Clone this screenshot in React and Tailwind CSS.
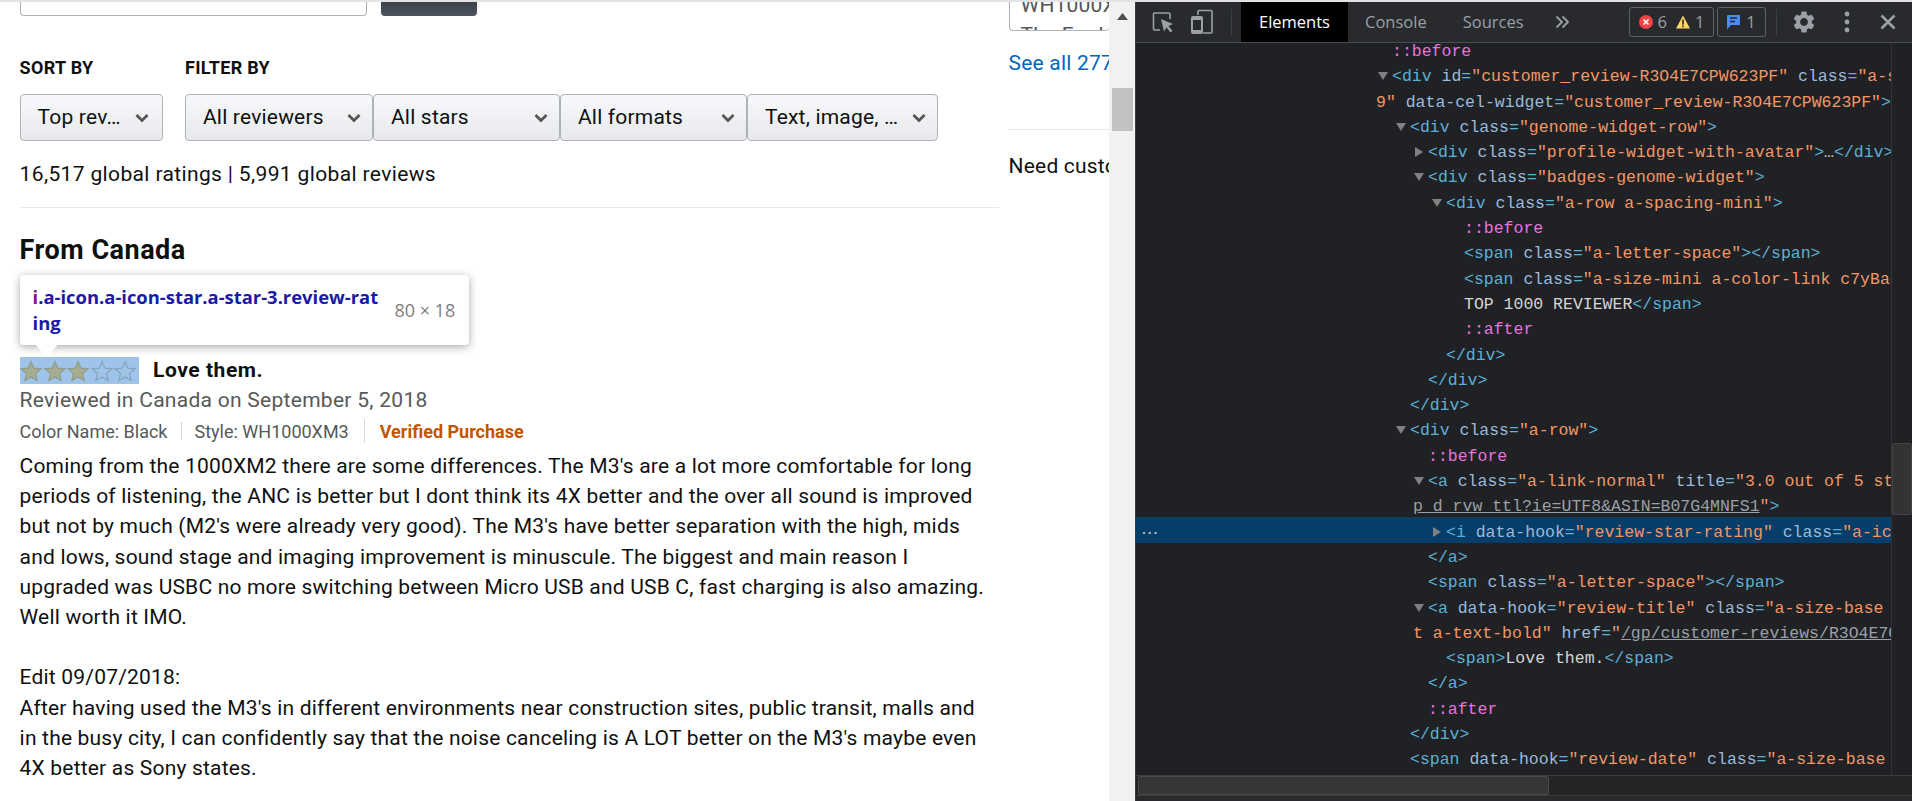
import { MdSettings } from "react-icons/md";

const FILTERS = [
  { label: "All reviewers", width: "w-[188px]" },
  { label: "All stars", width: "w-[187px]" },
  { label: "All formats", width: "w-[187px]" },
  { label: "Text, image, …", width: "w-[191px]" },
];

const REVIEW_LINES = [
  "Coming from the 1000XM2 there are some differences. The M3's are a lot more comfortable for long",
  "periods of listening, the ANC is better but I dont think its 4X better and the over all sound is improved",
  "but not by much (M2's were already very good). The M3's have better separation with the high, mids",
  "and lows, sound stage and imaging improvement is minuscule. The biggest and main reason I",
  "upgraded was USBC no more switching between Micro USB and USB C, fast charging is also amazing.",
  "Well worth it IMO.",
  "",
  "Edit 09/07/2018:",
  "After having used the M3's in different environments near construction sites, public transit, malls and",
  "in the busy city, I can confidently say that the noise canceling is A LOT better on the M3's maybe even",
  "4X better as Sony states.",
];

const INDENT = {
  0: "pl-[256px]",
  1: "pl-[274px]",
  2: "pl-[292px]",
  3: "pl-[310px]",
  4: "pl-[328px]",
  wrap0: "pl-[240px]",
  wrap2: "pl-[277px]",
};

const TOKEN = {
  t: "text-[#5db0d7]",
  n: "text-[#9bbbdc]",
  v: "text-[#f29766]",
  p: "text-[#e973de]",
  x: "text-[#d5d5d5]",
  l: "text-[#9aa0a6] underline",
  e: "text-[#d5d5d5]",
};

const TREE = [
  { i: 0, s: [["p", "::before"]] },
  { i: 0, a: "down", s: [["t", "<div "], ["n", "id"], ["t", "="], ["v", '"customer_review-R3O4E7CPW623PF"'], ["n", " class"], ["t", "="], ["v", '"a-section review aok-relative"']] },
  { i: "wrap0", s: [["v", '9"'], ["n", " data-cel-widget"], ["t", "="], ["v", '"customer_review-R3O4E7CPW623PF"'], ["t", ">"]] },
  { i: 1, a: "down", s: [["t", "<div "], ["n", "class"], ["t", "="], ["v", '"genome-widget-row"'], ["t", ">"]] },
  { i: 2, a: "right", s: [["t", "<div "], ["n", "class"], ["t", "="], ["v", '"profile-widget-with-avatar"'], ["t", ">"], ["e", "…"], ["t", "</div>"]] },
  { i: 2, a: "down", s: [["t", "<div "], ["n", "class"], ["t", "="], ["v", '"badges-genome-widget"'], ["t", ">"]] },
  { i: 3, a: "down", s: [["t", "<div "], ["n", "class"], ["t", "="], ["v", '"a-row a-spacing-mini"'], ["t", ">"]] },
  { i: 4, s: [["p", "::before"]] },
  { i: 4, s: [["t", "<span "], ["n", "class"], ["t", "="], ["v", '"a-letter-space"'], ["t", "></span>"]] },
  { i: 4, s: [["t", "<span "], ["n", "class"], ["t", "="], ["v", '"a-size-mini a-color-link c7yBadge"']] },
  { i: 4, s: [["x", "TOP 1000 REVIEWER"], ["t", "</span>"]] },
  { i: 4, s: [["p", "::after"]] },
  { i: 3, s: [["t", "</div>"]] },
  { i: 2, s: [["t", "</div>"]] },
  { i: 1, s: [["t", "</div>"]] },
  { i: 1, a: "down", s: [["t", "<div "], ["n", "class"], ["t", "="], ["v", '"a-row"'], ["t", ">"]] },
  { i: 2, s: [["p", "::before"]] },
  { i: 2, a: "down", s: [["t", "<a "], ["n", "class"], ["t", "="], ["v", '"a-link-normal"'], ["n", " title"], ["t", "="], ["v", '"3.0 out of 5 stars"']] },
  { i: "wrap2", s: [["l", "p_d_rvw_ttl?ie=UTF8&ASIN=B07G4MNFS1"], ["v", '"'], ["t", ">"]] },
  { i: 3, a: "right", selected: true, s: [["t", "<i "], ["n", "data-hook"], ["t", "="], ["v", '"review-star-rating"'], ["n", " class"], ["t", "="], ["v", '"a-icon a-icon-star"']] },
  { i: 2, s: [["t", "</a>"]] },
  { i: 2, s: [["t", "<span "], ["n", "class"], ["t", "="], ["v", '"a-letter-space"'], ["t", "></span>"]] },
  { i: 2, a: "down", s: [["t", "<a "], ["n", "data-hook"], ["t", "="], ["v", '"review-title"'], ["n", " class"], ["t", "="], ["v", '"a-size-base a-link-normal"']] },
  { i: "wrap2", s: [["v", "t a-text-bold"], ["v", '"'], ["n", " href"], ["t", "="], ["v", '"'], ["l", "/gp/customer-reviews/R3O4E7CPW623PF/ref"]] },
  { i: 3, s: [["t", "<span>"], ["x", "Love them."], ["t", "</span>"]] },
  { i: 2, s: [["t", "</a>"]] },
  { i: 2, s: [["p", "::after"]] },
  { i: 1, s: [["t", "</div>"]] },
  { i: 1, s: [["t", "<span "], ["n", "data-hook"], ["t", "="], ["v", '"review-date"'], ["n", " class"], ["t", "="], ["v", '"a-size-base a-color-secondary"']] },
];

function Chevron() {
  return (
    <svg width="14" height="10" viewBox="0 0 14 10" className="shrink-0">
      <path d="M1.5 2 L7 7.5 L12.5 2" fill="none" stroke="#555" strokeWidth="2.8" />
    </svg>
  );
}

function Select({ label, className }) {
  return (
    <div
      className={`flex h-[47px] items-center justify-between rounded-[4px] border border-[#adb1b8] bg-gradient-to-b from-[#f7f8fa] to-[#e7e9ec] pl-[17px] text-[#0f1111] ${className}`}
    >
      <span>{label}</span>
      <Chevron />
    </div>
  );
}

function Star({ filled }) {
  return (
    <svg width="24" height="24" viewBox="0 0 24 24" className="-mx-[0.3px] shrink-0">
      <path
        d="M12 2.5 L14.8 9.2 L22 9.8 L16.5 14.6 L18.2 21.6 L12 17.9 L5.8 21.6 L7.5 14.6 L2 9.8 L9.2 9.2 Z"
        fill={filled ? "#a5ad8f" : "none"}
        stroke={filled ? "#8f9c8c" : "#86a2ba"}
        strokeWidth="1.2"
      />
    </svg>
  );
}

function Arrow({ dir }) {
  return (
    <span className="-ml-[14px] inline-block w-[14px]">
      <svg width="10" height="10" viewBox="0 0 10 10">
        <path d={dir === "down" ? "M0 1 L10 1 L5 9 Z" : "M1 0 L9 5 L1 10 Z"} fill="#808080" />
      </svg>
    </span>
  );
}

function TreeRow({ row }) {
  return (
    <div className={`relative h-[25.3px] leading-[25.3px] whitespace-pre ${INDENT[row.i]}`}>
      {row.selected && (
        <>
          <div className="absolute inset-x-0 -top-[2.5px] h-[26px] bg-[#073d69]" />
          <span className="absolute left-[4px] -top-[2px] text-[13px] font-bold tracking-[-2px] text-[#c4c7c5]">...</span>
        </>
      )}
      <span className="relative">
        {row.a && <Arrow dir={row.a} />}
        {row.s.map(([kind, text], idx) => (
          <span key={idx} className={TOKEN[kind]}>
            {text}
          </span>
        ))}
      </span>
    </div>
  );
}

function AmazonPane() {
  return (
    <div className="flex h-full w-[1109px] shrink-0 overflow-hidden bg-white font-['Roboto',sans-serif] text-[21px] tracking-[0.19px] text-[#0f1111]">
      <div className="ml-[19.6px] w-[979px] shrink-0">
        <div className="flex h-[14px] gap-[14px]">
          <div className="w-[347px] rounded-b-[4px] border border-t-0 border-[#adb1b8] bg-white" />
          <div className="w-[96px] rounded-b-[4px] bg-gradient-to-b from-[#3b424b] to-[#4d545e]" />
        </div>

        <div className="mt-[42px] flex">
          <div className="w-[165.4px] shrink-0">
            <div className="text-[18px] font-bold leading-[20px] tracking-[0.3px]">SORT BY</div>
            <Select label="Top rev…" className="mt-[16px] w-[143px] pr-[13px]" />
          </div>
          <div>
            <div className="text-[18px] font-bold leading-[20px] tracking-[0.3px]">FILTER BY</div>
            <div className="mt-[16px] flex">
              {FILTERS.map((f) => (
                <Select key={f.label} label={f.label} className={`${f.width} pr-[11px]`} />
              ))}
            </div>
          </div>
        </div>

        <div className="mt-[18px] leading-[30px] tracking-[0.36px]">16,517 global ratings | 5,991 global reviews</div>
        <div className="mt-[18px] h-px bg-[#e7e7e7]" />
        <div className="mt-[27px] text-[27px] font-bold leading-[30px] tracking-[0.5px]">From Canada</div>

        <div className="relative mt-[92px] flex h-[27px] items-center">
          <div className="absolute -top-[82px] left-0 flex h-[70px] w-[449.6px] items-center justify-between rounded-[4px] bg-white pl-[13px] pr-[14px] font-['Open_Sans',sans-serif] tracking-normal shadow-[0_2px_8px_rgba(0,0,0,0.35)]">
            <div className="text-[18.4px] font-bold leading-[26px] text-[#1a1aa6]">
              <span className="text-[#881280]">i</span>.a-icon.a-icon-star.a-star-3.review-rat
              <br />
              ing
            </div>
            <div className="text-[18px] text-[#808080]">80 × 18</div>
          </div>
          <div className="absolute -top-[12px] left-[16px] h-[12px] w-[22px] bg-white [clip-path:polygon(0_0,100%_0,50%_100%)]" />
          <div className="flex h-[27px] w-[119.5px] items-center bg-[#9fc4e9]">
            {[true, true, true, false, false].map((filled, idx) => (
              <Star key={idx} filled={filled} />
            ))}
          </div>
          <div className="ml-[14px] font-bold tracking-[0.55px]">Love them.</div>
        </div>

        <div className="mt-px leading-[30px] tracking-[0.28px] text-[#565959]">Reviewed in Canada on September 5, 2018</div>
        <div className="mt-[4px] flex h-[24px] items-center text-[18px] tracking-normal text-[#565959]">
          <span>Color Name: Black</span>
          <span className="mx-[13px] h-[18px] w-px bg-[#d5d9d9]" />
          <span>Style: WH1000XM3</span>
          <span className="mx-[15px] h-[24px] w-px bg-[#d5d9d9]" />
          <span className="font-bold text-[#c45500]">Verified Purchase</span>
        </div>

        <div className="mt-[8px] leading-[30.2px] whitespace-nowrap">
          {REVIEW_LINES.map((line, idx) => (
            <div key={idx} className="h-[30.2px]">
              {line}
            </div>
          ))}
        </div>
      </div>

      <div className="ml-[10px] min-w-0 flex-1">
        <div className="h-[29px] overflow-hidden rounded-b-[4px] border-b border-l border-[#adb1b8] pl-[11px] text-[#555]">
          <div className="-mt-[12px] whitespace-nowrap leading-[30px]">WH1000XM3</div>
          <div className="whitespace-nowrap leading-[30px]">The For Her</div>
        </div>
        <div className="mt-[17px] whitespace-nowrap leading-[30px] text-[#0066c0]">See all 277 questions</div>
        <div className="mt-[51px] h-px bg-[#e7e7e7]" />
        <div className="mt-[21px] whitespace-nowrap leading-[30px]">Need customer service?</div>
      </div>
    </div>
  );
}

function PageScrollbar() {
  return (
    <div className="relative h-full w-[26px] shrink-0 bg-[#f1f1f1]">
      <div className="absolute left-[8px] top-[11px] h-[7px] w-[11px] bg-[#505050] [clip-path:polygon(50%_0,100%_100%,0_100%)]" />
      <div className="absolute left-[3px] top-[86px] h-[43px] w-[21px] bg-[#c1c1c1]" />
    </div>
  );
}

function DevTools() {
  return (
    <div className="relative flex h-full min-w-0 flex-1 flex-col overflow-hidden border-l border-[#3c3c3c] bg-[#202124]">
      <div className="relative z-10 flex h-[41px] shrink-0 items-center border-b border-[#494c50] bg-[#292a2d] font-['Open_Sans',sans-serif] text-[16.5px] text-[#9aa0a6]">
        <svg width="24" height="24" viewBox="0 0 24 24" className="ml-[15px] shrink-0">
          <path d="M9 20 H3.5 a1 1 0 0 1 -1 -1 V4 a1 1 0 0 1 1 -1 H18 a1 1 0 0 1 1 1 V9" fill="none" stroke="#9aa0a6" strokeWidth="1.6" />
          <path d="M10 9 L22 14 L17.5 16 L21.5 21 L19.5 22.5 L15.5 17.5 L13 21.5 Z" fill="#9aa0a6" />
        </svg>
        <svg width="24" height="26" viewBox="0 0 24 26" className="ml-[15px] shrink-0">
          <path d="M8 6 V2.5 a1 1 0 0 1 1 -1 H21 a1 1 0 0 1 1 1 V23 a1 1 0 0 1 -1 1 H13" fill="none" stroke="#9aa0a6" strokeWidth="1.6" />
          <rect x="2" y="8" width="10" height="16" rx="1" fill="none" stroke="#9aa0a6" strokeWidth="2" />
          <rect x="2" y="8" width="10" height="3" fill="#9aa0a6" />
          <rect x="2" y="21" width="10" height="3" fill="#9aa0a6" />
        </svg>
        <div className="ml-[17px] h-[26px] w-px bg-[#3c4043]" />
        <div className="ml-[9px] flex h-[40px] w-[107px] items-center justify-center bg-black text-white">Elements</div>
        <div className="ml-[17px]">Console</div>
        <div className="ml-[36px]">Sources</div>
        <svg width="15" height="14" viewBox="0 0 15 14" className="ml-[31px] shrink-0">
          <path d="M1.5 1.5 L7 7 L1.5 12.5 M7.5 1.5 L13 7 L7.5 12.5" fill="none" stroke="#9aa0a6" strokeWidth="1.8" />
        </svg>

        <div className="ml-auto flex items-center">
          <div className="flex h-[30px] w-[85px] items-center justify-center gap-[5px] rounded-[3px] border border-[#5f6368]">
            <svg width="14" height="14" viewBox="0 0 14 14">
              <circle cx="7" cy="7" r="7" fill="#ee4444" />
              <path d="M4.5 4.5 L9.5 9.5 M9.5 4.5 L4.5 9.5" stroke="#fff" strokeWidth="1.6" />
            </svg>
            <span>6</span>
            <svg width="14" height="14" viewBox="0 0 14 14" className="ml-[4px]">
              <path d="M7 0.5 L14 13.5 H0 Z" fill="#fdd663" />
              <rect x="6.2" y="4.5" width="1.6" height="5.2" fill="#292a2d" />
              <rect x="6.2" y="10.6" width="1.6" height="1.6" fill="#292a2d" />
            </svg>
            <span>1</span>
          </div>
          <div className="ml-[3px] flex h-[30px] w-[49px] items-center justify-center gap-[6px] rounded-[3px] border border-[#5f6368]">
            <svg width="13" height="15" viewBox="0 0 13 15">
              <path d="M1 0 H12 a1 1 0 0 1 1 1 V9 a1 1 0 0 1 -1 1 H4 L0 14.5 V1 a1 1 0 0 1 1 -1 Z" fill="#4a8cf7" />
              <path d="M3 3 H10 M3 6.5 H8" stroke="#292a2d" strokeWidth="1.4" />
            </svg>
            <span>1</span>
          </div>
          <div className="ml-[10px] h-[26px] w-px bg-[#3c4043]" />
          <MdSettings className="ml-[14px] shrink-0 text-[#9aa0a6]" size={26} />
          <svg width="6" height="22" viewBox="0 0 6 22" className="ml-[27px] shrink-0">
            <circle cx="3" cy="3" r="2.4" fill="#9aa0a6" />
            <circle cx="3" cy="11" r="2.4" fill="#9aa0a6" />
            <circle cx="3" cy="19" r="2.4" fill="#9aa0a6" />
          </svg>
          <svg width="16" height="16" viewBox="0 0 16 16" className="ml-[30px] mr-[16px] shrink-0">
            <path d="M1.5 1.5 L14.5 14.5 M14.5 1.5 L1.5 14.5" stroke="#9aa0a6" strokeWidth="2.6" />
          </svg>
        </div>
      </div>

      <div className="flex min-h-0 flex-1">
        <div className="-mt-[4px] min-w-0 flex-1 overflow-hidden font-['Liberation_Mono',monospace] text-[16.5px]">
          {TREE.map((row, idx) => (
            <TreeRow key={idx} row={row} />
          ))}
        </div>
        <div className="w-[21px] shrink-0 border-l border-[#333] pt-[400px]">
          <div className="h-[72px] rounded-[2px] border border-[#444] bg-[#333]" />
        </div>
      </div>

      <div className="relative z-10 h-[21px] shrink-0 border-y border-[#3c3c3c] bg-[#242424]">
        <div className="ml-[2px] h-full w-[411px] rounded-[2px] border border-[#4a4a4a] bg-[#363636]" />
      </div>
      <div className="h-[5px] shrink-0 bg-[#292a2d]" />
    </div>
  );
}

export default function App() {
  return (
    <div className="flex h-[801px] w-[1912px] flex-col overflow-hidden">
      <div className="h-[2px] shrink-0 bg-[#e3e3e3]" />
      <div className="flex min-h-0 flex-1">
        <AmazonPane />
        <PageScrollbar />
        <DevTools />
      </div>
    </div>
  );
}
